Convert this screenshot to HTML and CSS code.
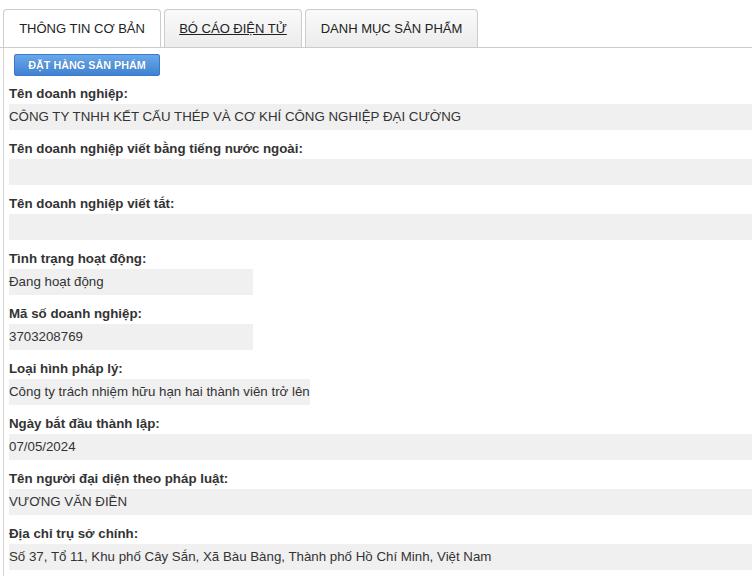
FILE: index.html
```html
<!DOCTYPE html>
<html lang="vi">
<head>
    <meta charset="UTF-8">
    <meta name="viewport" content="width=device-width, initial-scale=1.0">
    <title>Thông tin doanh nghiệp</title>
<link rel="stylesheet" href="styles.css">
</head>
<body>
    <div class="tabs">
        <div class="tab tab-active tab-1">THÔNG TIN CƠ BẢN</div>
        <div class="tab tab-2"><a href="#">BÓ CÁO ĐIỆN TỬ</a></div>
        <div class="tab tab-3">DANH MỤC SẢN PHẨM</div>
    </div>
    <div class="panel">
        <button class="order-button">ĐẶT HÀNG SẢN PHẨM</button>

        <div class="field">
            <div class="label">Tên doanh nghiệp:</div>
            <div class="value">CÔNG TY TNHH KẾT CẤU THÉP VÀ CƠ KHÍ CÔNG NGHIỆP ĐẠI CƯỜNG</div>
        </div>
        <div class="field">
            <div class="label">Tên doanh nghiệp viết bằng tiếng nước ngoài:</div>
            <div class="value"></div>
        </div>
        <div class="field">
            <div class="label">Tên doanh nghiệp viết tắt:</div>
            <div class="value"></div>
        </div>
        <div class="field">
            <div class="label">Tình trạng hoạt động:</div>
            <div class="value value-short">Đang hoạt động</div>
        </div>
        <div class="field">
            <div class="label">Mã số doanh nghiệp:</div>
            <div class="value value-short">3703208769</div>
        </div>
        <div class="field">
            <div class="label">Loại hình pháp lý:</div>
            <div class="value value-short">Công ty trách nhiệm hữu hạn hai thành viên trở lên</div>
        </div>
        <div class="field">
            <div class="label">Ngày bắt đầu thành lập:</div>
            <div class="value">07/05/2024</div>
        </div>
        <div class="field">
            <div class="label">Tên người đại diện theo pháp luật:</div>
            <div class="value">VƯƠNG VĂN ĐIỀN</div>
        </div>
        <div class="field">
            <div class="label">Địa chỉ trụ sở chính:</div>
            <div class="value">Số 37, Tổ 11, Khu phố Cây Sắn, Xã Bàu Bàng, Thành phố Hồ Chí Minh, Việt Nam</div>
        </div>
    </div>
</body>
</html>
```

FILE: styles.css
```css
body {
    font-family: "Liberation Sans", Arial, sans-serif;
    color: #333;
    background-color: #fff;
    margin: 0;
    padding: 0;
}

.tabs {
    display: flex;
    gap: 3px;
    padding: 9px 0 0 3px;
    border-bottom: 1px solid #ccc;
}

.tab {
    height: 38px;
    line-height: 38px;
    text-align: center;
    font-size: 13px;
    color: #222;
    border: 1px solid #ccc;
    border-bottom: none;
    border-radius: 4px 4px 0 0;
    background: linear-gradient(#fafafa, #ececec);
    box-sizing: border-box;
}

.tab-1 {
    width: 158px;
}

.tab-2 {
    width: 138px;
}

.tab-3 {
    width: 173px;
}

.tab-active {
    background: #fff;
}

.tab a {
    color: #222;
    text-decoration: underline;
}

.panel {
    border-left: 1px solid #d5d5d5;
    margin-left: 3px;
    padding: 6px 0 8px 5px;
}

.order-button {
    display: block;
    margin-left: 5px;
    width: 146px;
    height: 22px;
    padding: 0;
    font-family: "Liberation Sans", Arial, sans-serif;
    font-size: 10.8px;
    font-weight: bold;
    color: #fff;
    background: linear-gradient(#68a8ea, #3f82d2);
    border: 1px solid #3b79c6;
    border-radius: 2px;
    text-shadow: 0 0 1px rgba(0, 0, 0, 0.25);
    cursor: pointer;
}

.field {
    margin-top: 9px;
}

.field + .field {
    margin-top: 10px;
}

.label {
    font-size: 13.3px;
    font-weight: bold;
    line-height: 18px;
    margin-bottom: 1px;
}

.value {
    background-color: #f0f0f0;
    height: 26px;
    line-height: 26px;
    font-size: 13.3px;
    white-space: nowrap;
}

.value-short {
    display: inline-block;
    min-width: 244px;
    vertical-align: top;
}
```
